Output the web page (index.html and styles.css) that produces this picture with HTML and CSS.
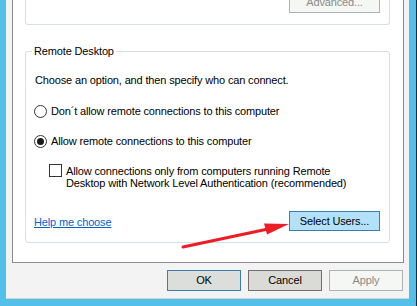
FILE: index.html
```html
<!DOCTYPE html>
<html>
    <head>
        <meta charset="utf-8">
        <title>System Properties - Remote</title>
        <link rel="stylesheet" href="styles.css">
    </head>
    <body>
        <div class="screen">
            <div class="window">
                <div class="tab_panel">
                    <div class="group_top">
                        <div class="btn btn_disabled btn_advanced">Advanced...</div>
                    </div>

                    <fieldset class="group_remote">
                        <legend>Remote Desktop</legend>
                        <div class="intro">Choose an option, and then specify who can connect.</div>

                        <div class="option option_first">
                            <span class="radio"></span>
                            <span>Don&#180;t allow remote connections to this computer</span>
                        </div>
                        <div class="option option_second">
                            <span class="radio radio_checked"></span>
                            <span>Allow remote connections to this computer</span>
                        </div>
                        <div class="nla">
                            <span class="check"></span>
                            <span class="nla_text">Allow connections only from computers running Remote<br>Desktop with Network Level Authentication (recommended)</span>
                        </div>

                        <div class="group_bottom">
                            <a class="help_link" href="#">Help me choose</a>
                            <div class="btn btn_select">Select Users...</div>
                        </div>
                    </fieldset>
                </div>

                <div class="dialog_buttons">
                    <div class="btn btn_default">OK</div>
                    <div class="btn btn_cancel">Cancel</div>
                    <div class="btn btn_disabled">Apply</div>
                </div>
            </div>

            <!-- red arrow pointing to Select Users -->
            <svg class="arrow" width="417" height="306" viewBox="0 0 417 306">
                <line x1="183" y1="247" x2="268" y2="229" stroke="#ee1c24" stroke-width="3" stroke-linecap="round"/>
                <polygon points="289,224 264,223.5 267,234.5" fill="#ee1c24"/>
            </svg>
        </div>
    </body>
</html>
```

FILE: styles.css
```css
* {
    box-sizing: border-box;
}

body {
    margin: 0;
    font-family: "Liberation Sans", Arial, sans-serif;
    font-size: 11px;
    line-height: 13px;
    letter-spacing: -0.15px;
    color: #000;
    overflow: hidden;
}

.screen {
    position: relative;
    width: 417px;
    height: 306px;
    background-color: #52c0e9;
    border-right: 1px solid #1c2a2e;
    overflow: hidden;
}

.window {
    margin-left: 6px;
    width: 403px;
    height: 299px;
    padding-left: 6px;
    background-color: #f3f3f3;
    border-bottom: 1px solid #d4d4d4;
}

.tab_panel {
    width: 392px;
    height: 263px;
    background-color: #fff;
    border: 1px solid #898c95;
    border-top: none;
    padding: 0 13px 0 12px;
}

.group_top {
    height: 25px;
    border: 1px solid #d5dfe5;
    border-top: none;
    border-radius: 0 0 3px 3px;
    display: flex;
    justify-content: flex-end;
    padding-right: 9px;
}

.btn {
    height: 21px;
    border: 1px solid #707070;
    background-color: #dcdedb;
    display: flex;
    justify-content: center;
    align-items: center;
    line-height: 13px;
}

.btn_advanced {
    width: 91px;
    margin-top: -9px;
    height: 22px;
}

.btn_disabled {
    background-color: #f4f7f3;
    border-color: #adb2b5;
    color: #8a8a8a;
}

.group_remote {
    margin: 20px 0 0 0;
    padding: 0 9px 11px 9px;
    border: 1px solid #d5dfe5;
    border-radius: 3px;
    min-width: 0;
}

.group_remote legend {
    padding: 0 2px;
    margin-left: -3px;
    line-height: 13px;
}

.intro {
    margin-top: 16px;
}

.option {
    display: flex;
    align-items: center;
}

.option_first {
    margin-top: 18px;
}

.option_second {
    margin-top: 17px;
}

.radio {
    width: 13px;
    height: 13px;
    margin-left: -1px;
    margin-right: 4px;
    border: 1px solid #333;
    border-radius: 50%;
    background-color: #fff;
    display: flex;
    justify-content: center;
    align-items: center;
}

.radio_checked::after {
    content: "";
    width: 7px;
    height: 7px;
    border-radius: 50%;
    background-color: #1a1a1a;
}

.nla {
    display: flex;
    align-items: flex-start;
    margin-top: 16px;
    padding-left: 14px;
}

.check {
    width: 13px;
    height: 13px;
    flex-shrink: 0;
    margin-right: 4px;
    border: 1px solid #333;
    background-color: #fff;
}

.nla_text {
    padding-top: 1px;
    line-height: 12px;
}

.group_bottom {
    display: flex;
    justify-content: space-between;
    align-items: center;
    margin-top: 22px;
}

.help_link {
    color: #0066cc;
    text-decoration: underline;
    margin-left: -1px;
    margin-top: 2px;
}

.btn_select {
    width: 91px;
    height: 20px;
    background-color: #b4e1fa;
    border-color: #3a7db4;
}

.dialog_buttons {
    display: flex;
    justify-content: flex-end;
    gap: 7px;
    width: 392px;
    padding-right: 1px;
    margin-top: 7px;
}

.dialog_buttons .btn {
    width: 74px;
}

.btn_default {
    border-color: #3a7db4;
}

.btn_cancel {
    background-color: #dadbd7;
}

.arrow {
    position: absolute;
    left: 0;
    top: 0;
    pointer-events: none;
}
```
